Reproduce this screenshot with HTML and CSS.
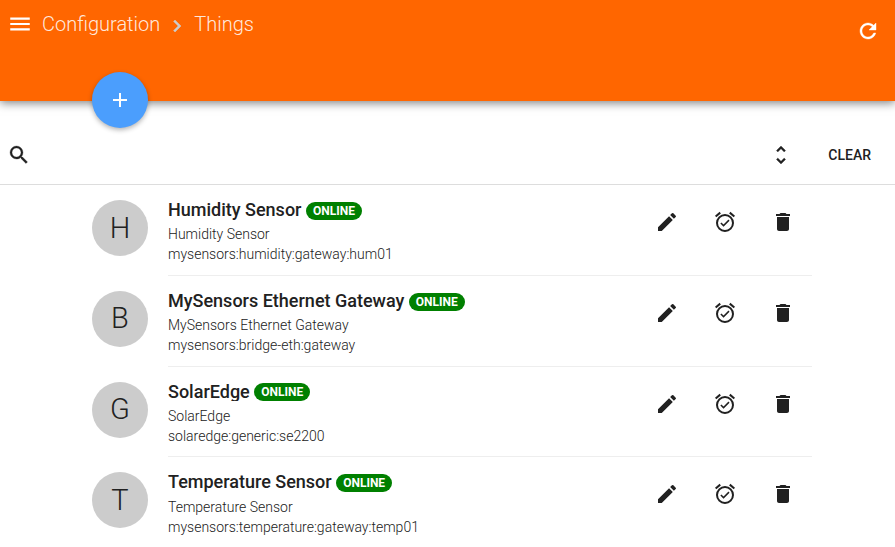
FILE: index.html
```html
<!DOCTYPE html>
<html lang="en">
<head>
<meta charset="utf-8">
<title>Things</title>
<link rel="stylesheet" href="styles.css">
</head>
<body>
<svg class="defs" width="0" height="0">
  <symbol id="edit" viewBox="0 0 24 24"><path d="M3 17.25V21h3.75L17.81 9.94l-3.75-3.75L3 17.25zM20.71 7.04a1 1 0 0 0 0-1.41l-2.34-2.34a1 1 0 0 0-1.41 0l-1.83 1.83 3.75 3.75 1.83-1.83z"/></symbol>
  <symbol id="alarm" viewBox="0 0 24 24"><path d="M22 5.72l-4.6-3.86-1.29 1.53 4.6 3.86L22 5.72zM7.88 3.39L6.6 1.86 2 5.71l1.29 1.53 4.59-3.85zM12 4a9 9 0 1 0 0 18 9 9 0 0 0 0-18zm0 16a7 7 0 1 1 0-14 7 7 0 0 1 0 14zm-1.46-5.47L8.41 12.4l-1.06 1.06 3.18 3.18 6-6-1.06-1.06-4.93 4.95z"/></symbol>
  <symbol id="trash" viewBox="0 0 24 24"><path d="M6 19c0 1.1.9 2 2 2h8c1.1 0 2-.9 2-2V7H6v12zM19 4h-3.5l-1-1h-5l-1 1H5v2h14V4z"/></symbol>
</svg>
<header class="header">
  <nav class="crumbs">
    <svg class="menu" viewBox="0 0 24 24"><path d="M3 18h18v-2H3v2zm0-5h18v-2H3v2zm0-7v2h18V6H3z"/></svg>
    <span>Configuration</span>
    <svg class="chevron" viewBox="0 0 24 24"><path d="M10 6L8.59 7.41 13.17 12l-4.58 4.59L10 18l6-6z"/></svg>
    <span>Things</span>
  </nav>
  <svg class="refresh" viewBox="0 0 24 24"><path d="M17.65 6.35C16.2 4.9 14.21 4 12 4c-4.42 0-7.99 3.58-7.99 8s3.57 8 7.99 8c3.73 0 6.84-2.55 7.73-6h-2.08c-.82 2.33-3.04 4-5.65 4-3.31 0-6-2.69-6-6s2.69-6 6-6c1.66 0 3.14.69 4.22 1.78L13 11h7V4l-2.35 2.35z"/></svg>
  <button class="fab" aria-label="Add"><svg viewBox="0 0 24 24"><path d="M19 13h-6v6h-2v-6H5v-2h6V5h2v6h6v2z"/></svg></button>
</header>
<div class="toolbar">
  <svg viewBox="0 0 24 24"><path d="M15.5 14h-.79l-.28-.27A6.471 6.471 0 0 0 16 9.5 6.5 6.5 0 1 0 9.5 16c1.61 0 3.09-.59 4.23-1.57l.27.28v.79l5 4.99L20.49 19l-4.99-5zm-6 0C7.01 14 5 11.99 5 9.5S7.01 5 9.5 5 14 7.01 14 9.5 11.99 14 9.5 14z"/></svg>
  <svg class="unfold" viewBox="0 0 24 24"><path d="M12 5.83L15.17 9l1.41-1.41L12 3 7.41 7.59 8.83 9 12 5.83zm0 12.34L8.83 15l-1.41 1.41L12 21l4.59-4.59L15.17 15 12 18.17z"/></svg>
  <span class="clear">CLEAR</span>
</div>
<main class="list">
  <article class="row">
    <div class="avatar">H</div>
    <div class="body">
      <div class="info"><h2>Humidity Sensor <span class="badge">ONLINE</span></h2><p>Humidity Sensor</p><p>mysensors:humidity:gateway:hum01</p></div>
      <div class="actions"><svg><use href="#edit"/></svg><svg><use href="#alarm"/></svg><svg><use href="#trash"/></svg></div>
    </div>
  </article>
  <article class="row">
    <div class="avatar">B</div>
    <div class="body">
      <div class="info"><h2>MySensors Ethernet Gateway <span class="badge">ONLINE</span></h2><p>MySensors Ethernet Gateway</p><p>mysensors:bridge-eth:gateway</p></div>
      <div class="actions"><svg><use href="#edit"/></svg><svg><use href="#alarm"/></svg><svg><use href="#trash"/></svg></div>
    </div>
  </article>
  <article class="row">
    <div class="avatar">G</div>
    <div class="body">
      <div class="info"><h2>SolarEdge <span class="badge">ONLINE</span></h2><p>SolarEdge</p><p>solaredge:generic:se2200</p></div>
      <div class="actions"><svg><use href="#edit"/></svg><svg><use href="#alarm"/></svg><svg><use href="#trash"/></svg></div>
    </div>
  </article>
  <article class="row">
    <div class="avatar">T</div>
    <div class="body">
      <div class="info"><h2>Temperature Sensor <span class="badge">ONLINE</span></h2><p>Temperature Sensor</p><p>mysensors:temperature:gateway:temp01</p></div>
      <div class="actions"><svg><use href="#edit"/></svg><svg><use href="#alarm"/></svg><svg><use href="#trash"/></svg></div>
    </div>
  </article>
</main>
</body>
</html>
```
FILE: styles.css
```css
* { box-sizing: border-box; }
body { margin: 0; height: 547px; overflow: hidden; background: #fff; color: #212121; font-family: Roboto, sans-serif; }
svg { display: block; flex: none; width: 24px; height: 24px; fill: currentColor; }
.defs { position: absolute; width: 0; height: 0; }
.header { position: relative; display: flex; justify-content: space-between; height: 101px; padding: 0 15px 0 6.5px; background: #f60; color: #fff; box-shadow: 0 2px 9px rgba(0, 0, 0, .5); }
.crumbs { display: flex; align-items: center; height: 48px; font-size: 20px; font-weight: 300; color: rgba(255, 255, 255, .87); }
.menu { width: 26px; height: 26px; margin: 0 9.5px 0 0; color: #fff; }
.chevron { margin: 4px 5px 0; color: #ccc; stroke: currentColor; stroke-width: .5px; }
.refresh { margin-top: 19px; stroke: currentColor; stroke-width: .4px; }
.fab { position: absolute; left: 92px; top: 72px; display: flex; align-items: center; justify-content: center; width: 56px; height: 56px; padding: 0; border: 0; border-radius: 50%; background: #4b9efd; color: #fff; box-shadow: 0 2px 5px rgba(0, 0, 0, .3); }
.toolbar { display: flex; align-items: center; height: 84px; padding: 24px 24px 0 7px; border-bottom: 1px solid #ddd; }
.toolbar svg { stroke: currentColor; stroke-width: .3px; }
.unfold { margin-left: auto; }
.clear { margin-left: 35.4px; font-size: 14px; font-weight: 500; }
.list { padding-left: 92px; width: 812px; }
.row { display: flex; gap: 20px; height: 91px; }
.row:nth-child(3) { height: 90px; }
.avatar { width: 56px; height: 56px; margin-top: 15px; flex: none; border-radius: 50%; background: #ccc; font-size: 29px; font-weight: 300; line-height: 56px; text-align: center; }
.row:nth-child(2) .avatar, .row:nth-child(3) .avatar { line-height: 54px; }
.body { display: flex; flex: 1; justify-content: space-between; border-bottom: 1px solid #eee; }
.row:last-child .body { border-bottom: 0; }
.info { padding-top: 14px; font-size: 14px; font-weight: 300; line-height: 20px; white-space: nowrap; }
h2 { margin: 0 0 5px; height: 20px; font-size: 18px; font-weight: 500; line-height: 22px; }
.row:nth-child(3) h2 { overflow: hidden; }
.row:last-child h2 { margin-bottom: 6px; }
p { margin: 0; }
.badge { position: relative; top: -1px; display: inline-block; height: 18px; padding: 0 7px; border-radius: 9px; background: #008000; color: #fff; font-size: 12px; font-weight: 700; line-height: 18px; }
.row:nth-child(3) .badge { top: -2px; }
.actions { display: flex; gap: 34px; padding: 25px 17px 0 0; }
```
